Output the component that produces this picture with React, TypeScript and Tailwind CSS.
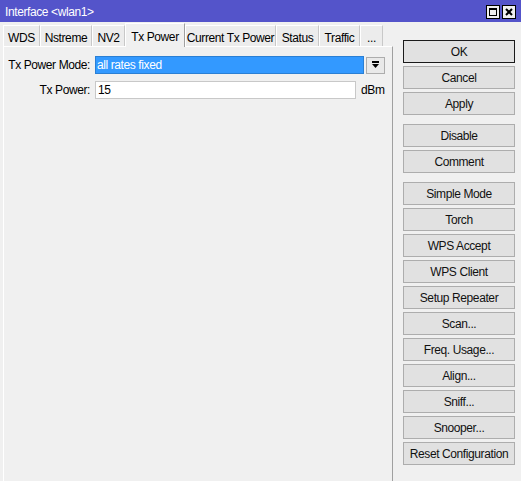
import React from "react";

const tabs = [
  { label: "WDS", w: "w-[37px]" },
  { label: "Nstreme", w: "w-[52px]" },
  { label: "NV2", w: "w-[33px]" },
  { label: "Tx Power", w: "w-[60px]", active: true },
  { label: "Current Tx Power", w: "w-[91px]" },
  { label: "Status", w: "w-[43px]" },
  { label: "Traffic", w: "w-[41px]" },
  { label: "...", w: "w-[23px]" },
];

const groups: string[][] = [
  ["OK", "Cancel", "Apply"],
  ["Disable", "Comment"],
  [
    "Simple Mode",
    "Torch",
    "WPS Accept",
    "WPS Client",
    "Setup Repeater",
    "Scan...",
    "Freq. Usage...",
    "Align...",
    "Sniff...",
    "Snooper...",
    "Reset Configuration",
  ],
];

function Btn({ label, primary }: { label: string; primary?: boolean }) {
  return (
    <div
      className={
        "h-[23px] w-[112px] flex items-center justify-center bg-[#e1e1e1] text-[12px] text-[#111] whitespace-nowrap border " +
        (primary ? "border-[#1a1a1a]" : "border-[#adadad]")
      }
    >
      {label}
    </div>
  );
}

export default function App() {
  return (
    <div
      className="w-[521px] h-[481px] overflow-hidden bg-[#f0f0f0] flex flex-col tracking-[-0.4px]"
      style={{ fontFamily: '"Liberation Sans", Arial, sans-serif' }}
    >
      {/* title bar */}
      <div className="h-[22px] bg-[#5454ca] flex items-center justify-between pl-[5px] pr-[5px] pt-[2px] shrink-0">
        <span className="text-white text-[12px] leading-none whitespace-nowrap">Interface &lt;wlan1&gt;</span>
        <div className="flex gap-[2px]">
          <div className="w-[14px] h-[14px] bg-[#f0f0f0] border border-black flex items-center justify-center">
            <div className="w-[8px] h-[8px] border border-black border-t-2" />
          </div>
          <div className="w-[14px] h-[14px] bg-[#f0f0f0] border border-black flex items-center justify-center">
            <svg width="8" height="8" viewBox="0 0 8 8">
              <path d="M1 1 L7 7 M7 1 L1 7" stroke="black" strokeWidth="2" />
            </svg>
          </div>
        </div>
      </div>

      <div className="flex flex-1 min-h-0">
        {/* left side */}
        <div className="w-[393px] pl-[3px] flex flex-col">
          <div className="flex items-end h-[24px] pt-[1px]">
            {tabs.map((t) =>
              t.active ? (
                <div
                  key={t.label}
                  className={
                    t.w +
                    " h-[24px] -mb-[1px] relative z-10 bg-[#f0f0f0] border-l border-t border-white border-r border-r-[#a0a0a0] flex items-start justify-center pt-[4px] text-[12px] whitespace-nowrap"
                  }
                >
                  {t.label}
                </div>
              ) : (
                <div
                  key={t.label}
                  className={
                    t.w +
                    " h-[21px] bg-[#ececec] border-l border-t border-white border-r border-r-[#c8c8c8] flex items-center justify-center pt-[4px] text-[12px] whitespace-nowrap"
                  }
                >
                  {t.label}
                </div>
              )
            )}
          </div>
          <div className="flex-1 border-l border-t border-white border-r border-r-[#a0a0a0] pt-[9px]">
            <div className="flex items-center h-[18px]">
              <div className="w-[88px] text-right text-[12px] pr-[2px] whitespace-nowrap">Tx Power Mode:</div>
              <div className="ml-[3px] w-[269px] h-[18px] bg-[#3399ff] border border-[#2a7fd4] text-white text-[12px] flex items-center pl-[1px] whitespace-nowrap">
                all rates fixed
              </div>
              <div className="ml-[2px] w-[19px] h-[17px] bg-[#e9e9e9] border border-[#adadad] flex items-center justify-center">
                <svg width="9" height="9" viewBox="0 0 9 9">
                  <rect x="1" y="0" width="7" height="2" fill="black" />
                  <path d="M1 3 H8 L4.5 7 Z" fill="black" />
                </svg>
              </div>
            </div>
            <div className="flex items-center h-[18px] mt-[7px]">
              <div className="w-[88px] text-right text-[12px] pr-[2px] whitespace-nowrap">Tx Power:</div>
              <div className="ml-[3px] w-[261px] h-[18px] bg-white border border-[#c8c8c8] text-[12px] flex items-center pl-[2px]">
                15
              </div>
              <div className="ml-[5px] text-[12px]">dBm</div>
            </div>
          </div>
        </div>

        {/* right side buttons */}
        <div className="ml-[10px] pt-[18px] flex flex-col gap-[9px]">
          {groups.map((g, gi) => (
            <div key={gi} className="flex flex-col gap-[3px]">
              {g.map((b) => (
                <Btn key={b} label={b} primary={b === "OK"} />
              ))}
            </div>
          ))}
        </div>
      </div>
    </div>
  );
}
